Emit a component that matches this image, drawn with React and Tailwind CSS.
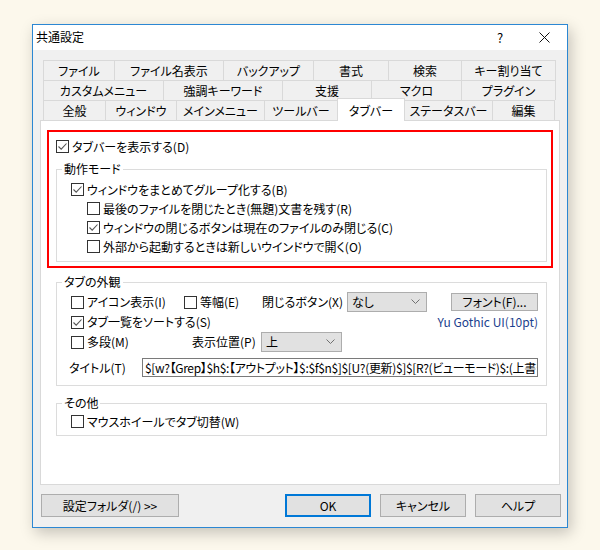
import React from 'react';

const FONT = "font-['Noto_Sans_CJK_JP','Noto_Sans',sans-serif] [font-feature-settings:'palt']";

const tabRows = [
  [
    { label: 'ファイル', w: 72 },
    { label: 'ファイル名表示', w: 109 },
    { label: 'バックアップ', w: 90 },
    { label: '書式', w: 75 },
    { label: '検索', w: 73 },
    { label: 'キー割り当て', w: 94 },
  ],
  [
    { label: 'カスタムメニュー', w: 121 },
    { label: '強調キーワード', w: 119 },
    { label: '支援', w: 89 },
    { label: 'マクロ', w: 90 },
    { label: 'プラグイン', w: 94 },
  ],
  [
    { label: '全般', w: 63 },
    { label: 'ウィンドウ', w: 71 },
    { label: 'メインメニュー', w: 88 },
    { label: 'ツールバー', w: 73 },
    { label: 'タブバー', w: 68, active: true },
    { label: 'ステータスバー', w: 88 },
    { label: '編集', w: 62 },
  ],
];

// small windows style checkbox
const Check = ({ checked }) => (
  <span className="w-[13px] h-[13px] shrink-0 border border-[#333333] bg-white flex items-center justify-center">
    {checked && (
      <svg width="11" height="11" viewBox="0 0 11 11">
        <path d="M1.5 5.5 L4.2 8.2 L9.5 2.5" fill="none" stroke="#555555" strokeWidth="1.1" />
      </svg>
    )}
  </span>
);

const CheckRow = ({ checked, label, className = '' }) => (
  <div className={`flex items-center h-[19px] ${className}`}>
    <Check checked={checked} />
    <span className="ml-[3px] whitespace-nowrap">{label}</span>
  </div>
);

const Group = ({ title, className = '', children }) => (
  <fieldset className={`border border-[#dcdcdc] w-[491px] ${className}`}>
    <legend className="ml-[5px] px-[2px] leading-[16px]">{title}</legend>
    {children}
  </fieldset>
);

const Select = ({ value, w }) => (
  <div className={`${w} h-[20px] bg-[#e1e1e1] border border-[#adadad] flex items-center pl-[4px] pr-[6px]`}>
    <span>{value}</span>
    <svg className="ml-auto" width="9" height="6" viewBox="0 0 9 6">
      <path d="M0.5 0.5 L4.5 4.5 L8.5 0.5" fill="none" stroke="#707070" strokeWidth="1" />
    </svg>
  </div>
);

const Button = ({ children, w, primary }) => (
  <button
    className={`${w} h-[23px] bg-[#e1e1e1] flex items-center justify-center ${
      primary ? 'border-2 border-[#0078d7]' : 'border border-[#adadad]'
    }`}
  >
    {children}
  </button>
);

export default function App() {
  return (
    <div className={`w-[600px] h-[550px] bg-[#fcf8ec] pt-[24px] pl-[32px] text-[12px] text-black ${FONT}`}>
      <div className="w-[536px] h-[504px] border border-[#2b87d3] bg-[#f0f0f0] flex flex-col shadow-[3px_5px_14px_rgba(0,0,0,0.22)]">
        {/* title bar */}
        <div className="h-[25px] bg-white flex items-center">
          <span className="pl-[3px] -mt-[1px]">共通設定</span>
          <span className="ml-auto w-[46px] text-center text-[13px] pl-[4px]">?</span>
          <span className="w-[46px] flex justify-center">
            <svg width="11" height="11" viewBox="0 0 11 11">
              <path d="M0.5 0.5 L10.5 10.5 M10.5 0.5 L0.5 10.5" stroke="#111111" strokeWidth="1" />
            </svg>
          </span>
        </div>

        <div className="flex-1 pt-[10px] px-[7px] flex flex-col">
          {/* tab rows */}
          <div className="px-[3px]">
            {tabRows.map((row, ri) => (
              <div key={ri} className="flex h-[20px]">
                {row.map((t, ti) => (
                  <div
                    key={t.label}
                    style={{ width: t.w }}
                    className={`flex items-center justify-center whitespace-nowrap border-t border-r border-[#d9d9d9] ${
                      ti === 0 ? 'border-l' : ''
                    } ${
                      t.active
                        ? 'relative z-10 bg-white -ml-[1px] border-l h-[23px] -mt-[2px] pt-[1px] self-start'
                        : 'bg-[#f0f0f0]'
                    }`}
                  >
                    {t.label}
                  </div>
                ))}
              </div>
            ))}
          </div>

          {/* panel */}
          <div className="w-[520px] h-[365px] border border-[#d9d9d9] bg-white">
            {/* highlighted section */}
            <div className="mt-[9px] ml-[6px] w-[506px] h-[138px] border-2 border-[#ff0000]">
              <CheckRow checked label="タブバーを表示する(D)" className="mt-[5px] pl-[7px]" />
              <Group title="動作モード" className="mt-[5px] ml-[7px] pt-[3px] pb-[5px]">
                <CheckRow checked label="ウィンドウをまとめてグループ化する(B)" className="pl-[14px]" />
                <CheckRow label="最後のファイルを閉じたとき(無題)文書を残す(R)" className="pl-[30px]" />
                <CheckRow checked label="ウィンドウの閉じるボタンは現在のファイルのみ閉じる(C)" className="pl-[30px]" />
                <CheckRow label="外部から起動するときは新しいウインドウで開く(O)" className="pl-[30px]" />
              </Group>
            </div>

            <Group title="タブの外観" className="mt-[6px] ml-[15px] pt-[2px] pb-[8px]">
              <div className="flex items-center h-[20px] pl-[14px]">
                <CheckRow label="アイコン表示(I)" className="w-[113px]" />
                <CheckRow label="等幅(E)" className="w-[78px]" />
                <span className="w-[85px] whitespace-nowrap">閉じるボタン(X)</span>
                <Select value="なし" w="w-[80px]" />
                <div className="ml-[24px] w-[87px] h-[18px] bg-[#e1e1e1] border border-[#adadad] flex items-center justify-center">
                  フォント(F)...
                </div>
              </div>
              <div className="flex items-center h-[20px] pl-[14px] pr-[8px]">
                <CheckRow checked label="タブ一覧をソートする(S)" />
                <span className="ml-auto text-[#1b3f8e] [font-feature-settings:normal]">Yu Gothic UI(10pt)</span>
              </div>
              <div className="flex items-center h-[20px] pl-[14px]">
                <CheckRow label="多段(M)" className="w-[121px]" />
                <span className="w-[69px] whitespace-nowrap">表示位置(P)</span>
                <Select value="上" w="w-[81px]" />
              </div>
              <div className="flex items-center h-[19px] mt-[6px] pl-[12px]">
                <span className="w-[73px] whitespace-nowrap">タイトル(T)</span>
                <div className="w-[396px] h-[19px] border border-[#7a7a7a] bg-white pl-[2px] flex items-center overflow-hidden whitespace-nowrap tracking-[-0.35px]">
                  $[w?【Grep】$h$:【アウトプット】$:$f$n$]$[U?(更新)$]$[R?(ビューモード)$:(上書き
                </div>
              </div>
            </Group>

            <Group title="その他" className="mt-[9px] ml-[15px] pt-[1px] pb-[4px]">
              <CheckRow label="マウスホイールでタブ切替(W)" className="pl-[14px]" />
            </Group>
          </div>

          {/* bottom buttons */}
          <div className="flex mt-[9px] ml-[1px] -mr-[1px]">
            <Button w="w-[138px]">設定フォルダ(/) &gt;&gt;</Button>
            <div className="ml-auto flex gap-[9px]">
              <Button w="w-[86px]" primary>OK</Button>
              <Button w="w-[86px]">キャンセル</Button>
              <Button w="w-[86px]">ヘルプ</Button>
            </div>
          </div>
        </div>
      </div>
    </div>
  );
}
